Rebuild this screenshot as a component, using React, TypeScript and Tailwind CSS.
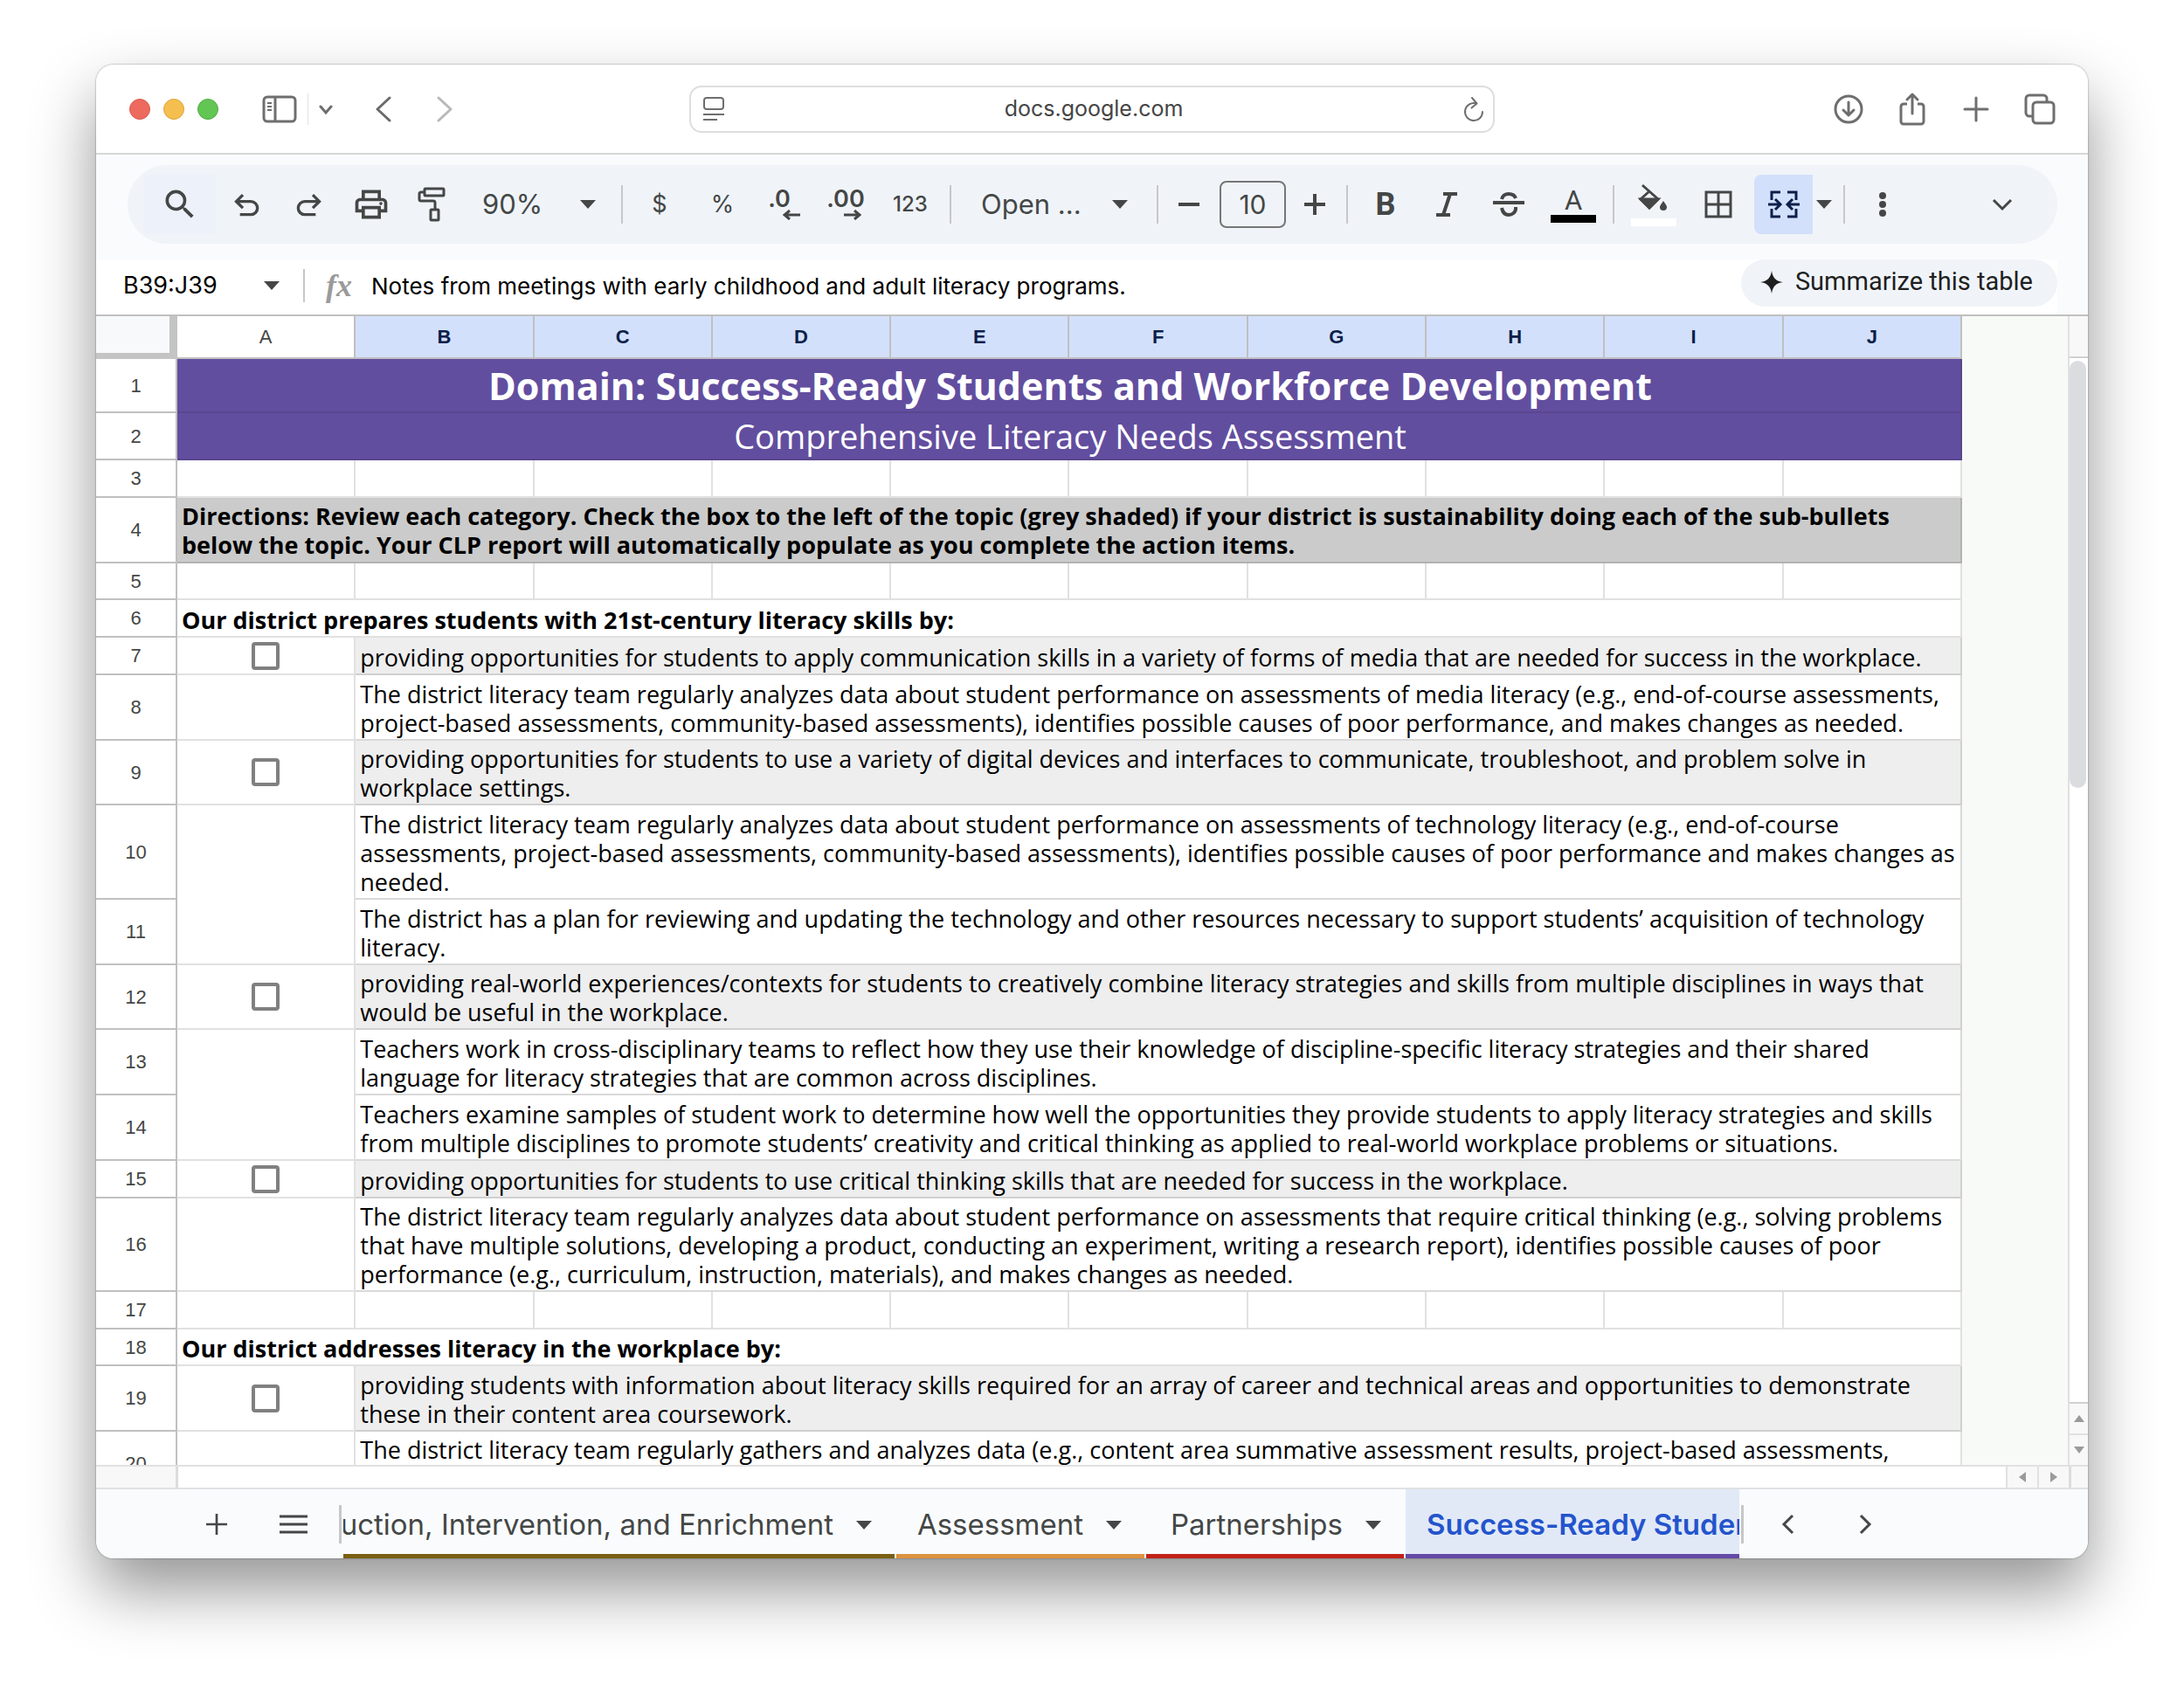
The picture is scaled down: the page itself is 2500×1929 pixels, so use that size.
import type { ReactNode } from "react"
import { MdSearch, MdOutlinePrint } from "react-icons/md"

type RowKind = "title" | "subtitle" | "blank" | "directions" | "section" | "topic" | "item"

interface SheetRow {
  num: number
  kind: RowKind
  height: string
  text?: string
  mergeDown?: boolean
}

const columns = ["A", "B", "C", "D", "E", "F", "G", "H", "I", "J"]

const rows: SheetRow[] = [
  { num: 1, kind: "title", height: "h-[62px]", text: "Domain: Success-Ready Students and Workforce Development" },
  { num: 2, kind: "subtitle", height: "h-[54px]", text: "Comprehensive Literacy Needs Assessment" },
  { num: 3, kind: "blank", height: "h-[43px]" },
  {
    num: 4,
    kind: "directions",
    height: "h-[75px]",
    text: "Directions: Review each category. Check the box to the left of the topic (grey shaded) if your district is sustainability doing each of the sub-bullets\nbelow the topic. Your CLP report will automatically populate as you complete the action items.",
  },
  { num: 5, kind: "blank", height: "h-[42px]" },
  { num: 6, kind: "section", height: "h-[43px]", text: "Our district prepares students with 21st-century literacy skills by:" },
  {
    num: 7,
    kind: "topic",
    height: "h-[43px]",
    text: "providing opportunities for students to apply communication skills in a variety of forms of media that are needed for success in the workplace.",
  },
  {
    num: 8,
    kind: "item",
    height: "h-[75px]",
    text: "The district literacy team regularly analyzes data about student performance on assessments of media literacy (e.g., end-of-course assessments,\nproject-based assessments, community-based assessments), identifies possible causes of poor performance, and makes changes as needed.",
  },
  {
    num: 9,
    kind: "topic",
    height: "h-[74px]",
    text: "providing opportunities for students to use a variety of digital devices and interfaces to communicate, troubleshoot, and problem solve in\nworkplace settings.",
  },
  {
    num: 10,
    kind: "item",
    height: "h-[108px]",
    mergeDown: true,
    text: "The district literacy team regularly analyzes data about student performance on assessments of technology literacy (e.g., end-of-course\nassessments, project-based assessments, community-based assessments), identifies possible causes of poor performance and makes changes as\nneeded.",
  },
  {
    num: 11,
    kind: "item",
    height: "h-[75px]",
    text: "The district has a plan for reviewing and updating the technology and other resources necessary to support students’ acquisition of technology\nliteracy.",
  },
  {
    num: 12,
    kind: "topic",
    height: "h-[74px]",
    text: "providing real-world experiences/contexts for students to creatively combine literacy strategies and skills from multiple disciplines in ways that\nwould be useful in the workplace.",
  },
  {
    num: 13,
    kind: "item",
    height: "h-[75px]",
    mergeDown: true,
    text: "Teachers work in cross-disciplinary teams to reflect how they use their knowledge of discipline-specific literacy strategies and their shared\nlanguage for literacy strategies that are common across disciplines.",
  },
  {
    num: 14,
    kind: "item",
    height: "h-[75px]",
    text: "Teachers examine samples of student work to determine how well the opportunities they provide students to apply literacy strategies and skills\nfrom multiple disciplines to promote students’ creativity and critical thinking as applied to real-world workplace problems or situations.",
  },
  {
    num: 15,
    kind: "topic",
    height: "h-[43px]",
    text: "providing opportunities for students to use critical thinking skills that are needed for success in the workplace.",
  },
  {
    num: 16,
    kind: "item",
    height: "h-[107px]",
    text: "The district literacy team regularly analyzes data about student performance on assessments that require critical thinking (e.g., solving problems\nthat have multiple solutions, developing a product, conducting an experiment, writing a research report), identifies possible causes of poor\nperformance (e.g., curriculum, instruction, materials), and makes changes as needed.",
  },
  { num: 17, kind: "blank", height: "h-[43px]" },
  { num: 18, kind: "section", height: "h-[42px]", text: "Our district addresses literacy in the workplace by:" },
  {
    num: 19,
    kind: "topic",
    height: "h-[75px]",
    text: "providing students with information about literacy skills required for an array of career and technical areas and opportunities to demonstrate\nthese in their content area coursework.",
  },
]

function Caret({ className = "" }: { className?: string }) {
  return (
    <svg viewBox="0 0 18 10" className={`h-[10px] w-[18px] shrink-0 fill-[#444746] ${className}`} aria-hidden="true">
      <path d="M0 0h18l-9 10z" />
    </svg>
  )
}

function Icon({
  children,
  size = "size-10",
  box = "0 0 24 24",
  stroke = 2,
}: {
  children: ReactNode
  size?: string
  box?: string
  stroke?: number
}) {
  return (
    <svg viewBox={box} className={`${size} shrink-0`} fill="none" stroke="currentColor" strokeWidth={stroke} aria-hidden="true">
      {children}
    </svg>
  )
}

function ToolButton({ label, width, children, className = "" }: { label: string; width: string; children: ReactNode; className?: string }) {
  return (
    <button type="button" aria-label={label} className={`flex h-[68px] shrink-0 items-center justify-center ${width} ${className}`}>
      {children}
    </button>
  )
}

function Divider() {
  return <div className="h-[44px] w-[2px] shrink-0 bg-[#c7c7c7]" />
}

function TitleBar() {
  return (
    <header className="grid h-[103px] grid-cols-[1fr_922px_1fr] items-center border-b-2 border-[#d6d6d6] bg-white text-[#6e6e6e]">
      <div className="flex items-center pl-[38px]">
        <div className="flex gap-[15px]">
          <button type="button" aria-label="Close" className="size-6 rounded-full border border-[#d95a4f] bg-[#ed6a5e]" />
          <button type="button" aria-label="Minimize" className="size-6 rounded-full border border-[#dba53c] bg-[#f5bf4f]" />
          <button type="button" aria-label="Zoom" className="size-6 rounded-full border border-[#51ae42] bg-[#62c554]" />
        </div>
        <button type="button" aria-label="Show sidebar" className="ml-[50px]">
          <Icon size="h-8 w-10" box="0 0 40 32" stroke={3}>
            <rect x="2" y="2" width="36" height="28" rx="4" />
            <path d="M15 2v28" />
            <path d="M6 9h5M6 13h5M6 17h5" strokeWidth="2" />
          </Icon>
        </button>
        <div className="ml-3 h-9 w-px bg-[#e0e0e0]" />
        <button type="button" aria-label="Tab groups" className="ml-3">
          <Icon size="size-4" box="0 0 16 16" stroke={3}>
            <path d="M2 5l6 7 6-7" strokeLinecap="round" />
          </Icon>
        </button>
        <button type="button" aria-label="Back" className="ml-[46px] text-[#6a6a6a]">
          <Icon size="h-8 w-6" box="0 0 24 32" stroke={3}>
            <path d="M19 3L5 16l14 13" strokeLinecap="round" strokeLinejoin="round" />
          </Icon>
        </button>
        <button type="button" aria-label="Forward" className="ml-[46px] text-[#b9b9b9]">
          <Icon size="h-8 w-6" box="0 0 24 32" stroke={3}>
            <path d="M5 3l14 13L5 29" strokeLinecap="round" strokeLinejoin="round" />
          </Icon>
        </button>
      </div>
      <div className="flex h-[54px] items-center rounded-[14px] border-2 border-[#dedede] pr-2 pl-3">
        <button type="button" aria-label="Page menu">
          <Icon size="h-7 w-7" box="0 0 28 28" stroke={2}>
            <rect x="3" y="1" width="22" height="13" rx="3" />
            <path d="M2 20h24M2 26h16" />
          </Icon>
        </button>
        <input
          aria-label="Address"
          defaultValue="docs.google.com"
          className="min-w-0 flex-1 bg-transparent text-center font-['Inter',sans-serif] text-[25px] text-[#454545] outline-none"
        />
        <button type="button" aria-label="Reload">
          <Icon size="h-8 w-7" box="0 0 28 32" stroke={2}>
            <path d="M17 9.500a10 10 0 1 0 7 9.500" strokeLinecap="round" />
            <path d="M12 3l5.500 6.500-6 5" strokeLinecap="round" strokeLinejoin="round" />
          </Icon>
        </button>
      </div>
      <div className="flex items-center justify-end gap-[37px] pr-[37px]">
        <button type="button" aria-label="Downloads">
          <Icon size="size-9" box="0 0 36 36" stroke={3}>
            <circle cx="18" cy="18" r="15" />
            <path d="M18 10v15M12 19l6 6 6-6" strokeLinecap="round" strokeLinejoin="round" />
          </Icon>
        </button>
        <button type="button" aria-label="Share">
          <Icon size="h-10 w-9" box="0 0 36 40" stroke={3}>
            <path d="M12 14H8a3 3 0 0 0-3 3v17a3 3 0 0 0 3 3h20a3 3 0 0 0 3-3V17a3 3 0 0 0-3-3h-4" />
            <path d="M18 25V3M12 9l6-6 6 6" strokeLinecap="round" strokeLinejoin="round" />
          </Icon>
        </button>
        <button type="button" aria-label="New tab">
          <Icon size="size-9" box="0 0 36 36" stroke={3}>
            <path d="M18 5v26M5 18h26" strokeLinecap="round" />
          </Icon>
        </button>
        <button type="button" aria-label="Tab overview">
          <Icon size="size-9" box="0 0 36 36" stroke={3}>
            <rect x="10" y="10" width="24" height="24" rx="4" />
            <path d="M10 26H6a4 4 0 0 1-4-4V6a4 4 0 0 1 4-4h16a4 4 0 0 1 4 4v4" />
          </Icon>
        </button>
      </div>
    </header>
  )
}

function Toolbar() {
  return (
    <div className="bg-[#f9fbfd] pt-3 pr-[35px] pb-[18px] pl-9">
      <div className="flex h-[90px] items-center rounded-full bg-[#f0f4f9] pr-[30px] pl-[18px] font-['Inter',sans-serif] text-[#444746]">
        <ToolButton label="Search the menus" width="w-[84px]" className="rounded bg-[#edf2fa]">
          <MdSearch className="size-11" />
        </ToolButton>
        <ToolButton label="Undo" width="w-[70px]">
          <Icon stroke={2}>
            <path d="M7 19h7.500a4.500 4.500 0 0 0 0-9H5" />
            <path d="M9 5.500L4.500 10 9 14.500" />
          </Icon>
        </ToolButton>
        <ToolButton label="Redo" width="w-[70px]">
          <Icon stroke={2}>
            <path d="M17 19H9.500a4.500 4.500 0 0 1 0-9H19" />
            <path d="M15 5.500l4.500 4.500-4.500 4.500" />
          </Icon>
        </ToolButton>
        <ToolButton label="Print" width="w-[72px]" className="pl-[2px]">
          <MdOutlinePrint className="size-11" />
        </ToolButton>
        <ToolButton label="Paint format" width="w-[68px]">
          <Icon size="h-10 w-8" box="0 0 32 40" stroke={3}>
            <rect x="8" y="2" width="22" height="8" rx="1" />
            <path d="M8 6H4a2 2 0 0 0-2 2v6a2 2 0 0 0 2 2h14a2 2 0 0 1 2 2v8" />
            <rect x="15" y="26" width="9" height="12" rx="1" />
          </Icon>
        </ToolButton>
        <label className="flex w-[183px] shrink-0 items-center pl-6">
          <select aria-label="Zoom" className="w-[112px] appearance-none bg-transparent text-[31px] outline-none">
            <option>90%</option>
          </select>
          <Caret />
        </label>
        <Divider />
        <ToolButton label="Format as currency" width="w-[84px]">
          <span className="text-[27px]">$</span>
        </ToolButton>
        <ToolButton label="Format as percent" width="w-[60px]">
          <span className="text-[27px]">%</span>
        </ToolButton>
        <ToolButton label="Decrease decimal places" width="w-[74px]" className="flex-col pr-1">
          <span className="text-[27px] leading-6 font-semibold">.0</span>
          <Icon size="ml-7 h-3 w-5" box="0 0 20 12" stroke={3}>
            <path d="M20 6H2M8 1L2 6l6 5" />
          </Icon>
        </ToolButton>
        <ToolButton label="Increase decimal places" width="w-[74px]" className="flex-col">
          <span className="text-[27px] leading-6 font-semibold">.00</span>
          <Icon size="ml-4 h-3 w-5" box="0 0 20 12" stroke={3}>
            <path d="M0 6h18M12 1l6 5-6 5" />
          </Icon>
        </ToolButton>
        <ToolButton label="More formats" width="w-[74px]" className="mr-2">
          <span className="text-[24px] font-medium">123</span>
        </ToolButton>
        <Divider />
        <label className="flex w-[235px] shrink-0 items-center pl-[34px]">
          <select aria-label="Font" className="w-[150px] appearance-none bg-transparent text-[31px] outline-none">
            <option>Open ...</option>
          </select>
          <Caret />
        </label>
        <Divider />
        <ToolButton label="Decrease font size" width="w-[70px]">
          <Icon size="size-8" stroke={3}>
            <path d="M3 12h18" />
          </Icon>
        </ToolButton>
        <input
          aria-label="Font size"
          defaultValue="10"
          className="h-[54px] w-[76px] shrink-0 rounded-lg border-2 border-[#747775] bg-transparent text-center text-[30px] outline-none"
        />
        <ToolButton label="Increase font size" width="w-[69px]" className="pr-1">
          <Icon size="size-8" stroke={3}>
            <path d="M3 12h18M12 3v18" />
          </Icon>
        </ToolButton>
        <Divider />
        <ToolButton label="Bold" width="w-[86px]">
          <span className="font-['Roboto',sans-serif] text-[36px] font-bold">B</span>
        </ToolButton>
        <ToolButton label="Italic" width="w-[53px]">
          <Icon size="h-7 w-6" box="0 0 24 28" stroke={4}>
            <path d="M8 2h16M0 26h16M16 2L8 26" />
          </Icon>
        </ToolButton>
        <ToolButton label="Strikethrough" width="w-[90px]">
          <Icon size="h-7 w-9" box="0 0 36 28" stroke={4}>
            <path d="M0 12h36" />
            <path d="M10 8c1-4 4-6 8-6s7 2 8 5" />
            <path d="M10 18c1 5 4 8 8 8s8-3 8-7v-2" />
          </Icon>
        </ToolButton>
        <ToolButton label="Text color" width="w-[58px]" className="mr-4 flex-col">
          <span className="font-['Roboto',sans-serif] text-[31px] leading-8">A</span>
          <span className="h-[9px] w-[52px] bg-black" />
        </ToolButton>
        <Divider />
        <ToolButton label="Fill color" width="w-[90px]" className="flex-col gap-2">
          <Icon size="h-8 w-9" box="0 0 36 32" stroke={3}>
            <path d="M5 2l18 16-10 10L3 18 13 9" />
            <path d="M3 18h20L13 28z" fill="currentColor" />
            <path d="M29 20c3 4 4 6 4 7a4 4 0 0 1-8 0c0-1 1-3 4-7z" fill="currentColor" stroke="none" />
          </Icon>
          <span className="h-[9px] w-[52px] bg-white" />
        </ToolButton>
        <ToolButton label="Borders" width="w-[58px]">
          <Icon size="size-8" box="0 0 32 32" stroke={3}>
            <path d="M2 2h28v28H2zM16 2v28M2 16h28" />
          </Icon>
        </ToolButton>
        <ToolButton label="Merge cells" width="w-[67px]" className="ml-3 rounded-l-lg bg-[#d3e0fb] text-[#0b1f4b]">
          <Icon size="h-8 w-9" box="0 0 36 32" stroke={3}>
            <path d="M4 11V2h10M22 2h10v9M32 21v9H22M14 30H4v-9" />
            <path d="M0 16h13M8 10l6 6-6 6M36 16H23M28 10l-6 6 6 6" />
          </Icon>
        </ToolButton>
        <ToolButton label="Merge options" width="w-[26px]" className="mr-[9px]">
          <Caret />
        </ToolButton>
        <Divider />
        <ToolButton label="More" width="w-[86px]">
          <Icon size="h-8 w-3" box="0 0 12 32">
            <g fill="currentColor" stroke="none">
              <circle cx="6" cy="6" r="4" />
              <circle cx="6" cy="16" r="4" />
              <circle cx="6" cy="26" r="4" />
            </g>
          </Icon>
        </ToolButton>
        <ToolButton label="Hide the menus" width="w-[66px]" className="ml-auto">
          <Icon size="size-6" box="0 0 24 24" stroke={3}>
            <path d="M2 7l10 10L22 7" />
          </Icon>
        </ToolButton>
      </div>
    </div>
  )
}

function FormulaBar() {
  return (
    <div className="flex h-[65px] items-start border-b-2 border-[#c0c0c0] bg-[#f9fbfd] pr-[35px] font-['Inter',sans-serif]">
      <div className="flex h-[63px] min-w-0 flex-1 items-start bg-white">
        <div className="flex h-[60px] min-w-0 flex-1 items-center">
          <input aria-label="Name box" defaultValue="B39:J39" className="w-[160px] bg-transparent pl-[31px] text-[27px] text-black outline-none" />
          <button type="button" aria-label="Named ranges" className="ml-8">
            <Caret />
          </button>
          <div className="ml-[27px] h-[38px] w-[2px] bg-[#c7c7c7]" />
          <span className="ml-6 w-[34px] font-['Liberation_Serif',serif] text-[36px] leading-9 font-bold text-[#9a9a9a] italic">fx</span>
          <input
            aria-label="Formula"
            defaultValue="Notes from meetings with early childhood and adult literacy programs."
            className="ml-[18px] min-w-0 flex-1 bg-transparent text-[26px] text-black outline-none"
          />
        </div>
        <button
          type="button"
          className="flex h-[54px] items-center gap-[14px] rounded-full bg-[#f0f4f9] pr-7 pb-[2px] pl-[22px] font-['Roboto',sans-serif] text-[29px] text-[#1f1f1f]"
        >
          <svg viewBox="0 0 26 26" className="size-[26px] fill-[#1f1f1f]" aria-hidden="true">
            <path d="M13 0c1 8 5 12 13 13-8 1-12 5-13 13-1-8-5-12-13-13 8-1 12-5 13-13z" />
          </svg>
          Summarize this table
        </button>
      </div>
    </div>
  )
}

function RowHeader({ num }: { num: number }) {
  return (
    <th scope="row" className="border-r-2 border-b-2 border-[#c0c0c0] bg-white text-center font-['Liberation_Sans',sans-serif] text-[22px] font-normal text-[#444746]">
      {num}
    </th>
  )
}

const bannerStyles: Record<string, string> = {
  title: "border-[#5a468f] bg-[#624e9f] text-center align-middle text-[43px] font-bold text-white",
  subtitle: "border-[#5a468f] bg-[#624e9f] text-center align-middle text-[38px] text-white",
  directions: "border-[#b2b2b2] bg-[#cbcbcb] pb-[3px] align-bottom font-bold",
  section: "border-[#e1e1e1] bg-white pb-[2px] align-bottom font-bold",
}

function Row({ row }: { row: SheetRow }) {
  if (row.kind === "blank") {
    return (
      <tr className={row.height}>
        <RowHeader num={row.num} />
        {columns.map((col) => (
          <td key={col} className="border-r-2 border-b-2 border-[#e1e1e1] bg-white" />
        ))}
      </tr>
    )
  }

  if (row.kind !== "topic" && row.kind !== "item") {
    return (
      <tr className={row.height}>
        <RowHeader num={row.num} />
        <td colSpan={10} className={`border-r-2 border-b-2 pr-[2px] pl-[5px] leading-[33px] whitespace-pre-line ${bannerStyles[row.kind]}`}>
          {row.text}
        </td>
      </tr>
    )
  }

  const topic = row.kind === "topic"
  return (
    <tr className={row.height}>
      <RowHeader num={row.num} />
      <td className={`border-r-2 bg-white text-center align-middle ${row.mergeDown ? "border-[#e1e1e1]" : "border-b-2 border-[#e1e1e1]"}`}>
        {topic && (
          <input
            type="checkbox"
            aria-label={row.text}
            className="mx-auto block size-8 appearance-none rounded border-4 border-[#808080] bg-white"
          />
        )}
      </td>
      <td
        colSpan={9}
        className={`border-r-2 border-b-2 pr-[2px] pb-[2px] pl-[5px] align-bottom leading-[33px] whitespace-pre-line ${topic ? "border-[#d0d0d0] bg-[#eeeeee]" : "border-[#d9d9d9] bg-white"}`}
      >
        {row.text}
      </td>
    </tr>
  )
}

function Sheet() {
  return (
    <div className="flex bg-[#f8faf7]">
      <div className="min-w-0 flex-1 pr-[121px]">
        <table className="w-full table-fixed border-separate border-spacing-0 font-['Open_Sans',sans-serif] text-[27px] text-black">
          <colgroup>
            <col className="w-[93px]" />
            {columns.map((col) => (
              <col key={col} />
            ))}
          </colgroup>
          <thead>
            <tr className="h-[49px] font-['Liberation_Sans',sans-serif] text-[22px]">
              <td className="border-r-[9px] border-b-[7px] border-[#c4c4c4] bg-[#f8f9fa]" />
              {columns.map((col) => (
                <th
                  key={col}
                  scope="col"
                  className={`border-r-2 border-b-2 border-[#c0c0c0] text-center ${col === "A" ? "bg-white font-normal text-[#444746]" : "bg-[#d3e0fb] font-bold text-[#0b1f4b]"}`}
                >
                  {col}
                </th>
              ))}
            </tr>
          </thead>
          <tbody>
            {rows.map((row) => (
              <Row key={row.num} row={row} />
            ))}
            <tr>
              <th scope="row" className="border-r-2 border-[#c0c0c0] bg-white p-0 font-['Liberation_Sans',sans-serif] text-[22px] font-normal text-[#444746]">
                <div className="h-[38px] overflow-hidden pt-5">20</div>
              </th>
              <td className="border-r-2 border-[#e1e1e1] bg-white" />
              <td colSpan={9} className="border-r-2 border-[#e1e1e1] bg-white p-0">
                <div className="h-[38px] overflow-hidden pt-1 pr-[2px] pl-[5px] leading-[33px]">
                  The district literacy team regularly gathers and analyzes data (e.g., content area summative assessment results, project-based assessments,
                </div>
              </td>
            </tr>
          </tbody>
        </table>
      </div>
      <div className="flex w-[23px] shrink-0 flex-col border-l-2 border-[#e1e1e1] bg-white">
        <div className="h-[48px] border-b-2 border-[#d0d0d0] bg-[#f8f8f8]" />
        <div className="mt-[3px] h-[489px] w-[19px] rounded-full bg-[#dadce0]" />
        <button type="button" aria-label="Scroll up" className="mt-auto flex h-9 items-center justify-center border-t-2 border-[#d0d0d0] bg-[#f8f8f8]">
          <svg viewBox="0 0 12 8" className="h-2 w-3 fill-[#9a9a9a]" aria-hidden="true">
            <path d="M6 0l6 8H0z" />
          </svg>
        </button>
        <button type="button" aria-label="Scroll down" className="flex h-9 items-center justify-center border-t-2 border-[#e1e1e1] bg-[#f8f8f8]">
          <svg viewBox="0 0 12 8" className="h-2 w-3 fill-[#9a9a9a]" aria-hidden="true">
            <path d="M0 0h12L6 8z" />
          </svg>
        </button>
      </div>
    </div>
  )
}

function HorizontalScroll() {
  return (
    <div className="flex h-[26px] border-t-2 border-[#e1e1e1] bg-white">
      <div className="w-[94px] border-r-[3px] border-[#dcdcdc] bg-[#f8f8f8]" />
      <div className="flex-1" />
      <button type="button" aria-label="Scroll left" className="flex w-9 items-center justify-center border-l-2 border-[#e1e1e1] bg-[#f8f8f8]">
        <svg viewBox="0 0 8 12" className="h-3 w-2 fill-[#9a9a9a]" aria-hidden="true">
          <path d="M8 0v12L0 6z" />
        </svg>
      </button>
      <button type="button" aria-label="Scroll right" className="flex w-9 items-center justify-center border-l-2 border-[#e1e1e1] bg-[#f8f8f8]">
        <svg viewBox="0 0 8 12" className="h-3 w-2 fill-[#9a9a9a]" aria-hidden="true">
          <path d="M0 0l8 6-8 6z" />
        </svg>
      </button>
      <div className="w-[22px] border-l-[3px] border-[#dcdcdc] bg-[#f8f8f8]" />
    </div>
  )
}

function SheetTab({ name, width, line }: { name: string; width: string; line: string }) {
  return (
    <button type="button" className={`flex h-full shrink-0 items-center justify-end gap-[26px] border-b-[5px] pt-2 pr-[26px] whitespace-nowrap ${width} ${line}`}>
      {name}
      <Caret />
    </button>
  )
}

function TabBar() {
  return (
    <nav className="flex h-[81px] items-center border-t-2 border-[#dfe1e3] bg-[#f9fbfd] font-['Inter',sans-serif] text-[33px] text-[#444746]">
      <button type="button" aria-label="Add sheet" className="ml-[122px]">
        <Icon size="size-8" stroke={2}>
          <path d="M12 3v18M3 12h18" />
        </Icon>
      </button>
      <button type="button" aria-label="All sheets" className="ml-[54px]">
        <Icon size="h-6 w-9" box="0 0 36 24" stroke={3}>
          <path d="M2 3h32M2 12h32M2 21h32" />
        </Icon>
      </button>
      <div className="ml-[34px] h-[44px] w-[3px] bg-[#c7c7c7]" />
      <div className="ml-[2px] flex h-full min-w-0 flex-1 gap-[2px] overflow-hidden">
        <SheetTab name="Instruction, Intervention, and Enrichment" width="w-[631px]" line="border-[#7a5f12]" />
        <SheetTab name="Assessment" width="w-[284px]" line="border-[#dd9240]" />
        <SheetTab name="Partnerships" width="w-[295px]" line="border-[#c02218]" />
        <button
          type="button"
          aria-current="page"
          className="h-full shrink-0 border-b-[5px] border-[#6449a6] bg-[#e1e9f7] px-6 pt-2 font-semibold whitespace-nowrap text-[#2354cc]"
        >
          Success-Ready Students
        </button>
      </div>
      <div className="ml-[2px] h-[44px] w-[3px] bg-[#c7c7c7]" />
      <button type="button" aria-label="Previous sheets" className="ml-[39px]">
        <Icon size="size-6" stroke={3}>
          <path d="M17 2L7 12l10 10" />
        </Icon>
      </button>
      <button type="button" aria-label="Next sheets" className="mr-[243px] ml-16">
        <Icon size="size-6" stroke={3}>
          <path d="M7 2l10 10L7 22" />
        </Icon>
      </button>
    </nav>
  )
}

export default function App() {
  return (
    <div className="bg-white px-[110px] pt-[74px] pb-[145px]">
      <main className="overflow-hidden rounded-[20px] bg-white shadow-[0_0_2px_rgba(0,0,0,0.5),0_36px_72px_rgba(0,0,0,0.42)]">
        <TitleBar />
        <Toolbar />
        <FormulaBar />
        <Sheet />
        <HorizontalScroll />
        <TabBar />
      </main>
    </div>
  )
}
